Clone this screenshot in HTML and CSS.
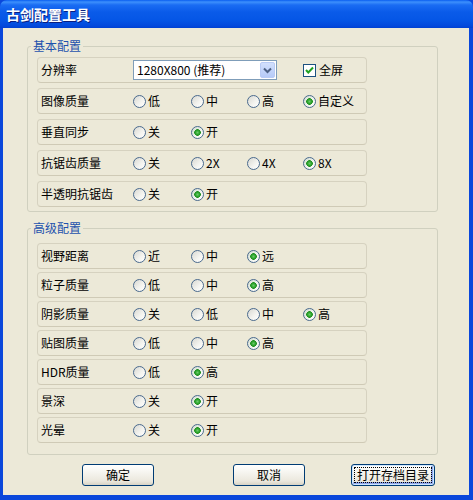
FILE: index.html
```html
<!DOCTYPE html>
<html lang="zh-CN">
<head>
    <meta charset="UTF-8">
    <title>古剑配置工具</title>
    <link rel="stylesheet" href="styles.css">
</head>
<body>
    <div class="window">
        <div class="titlebar">古剑配置工具</div>

        <div class="content">
            <fieldset class="group basic">
                <legend>基本配置</legend>
                <div class="rows">
                    <div class="row">
                        <span class="label">分辨率</span>
                        <div class="combo">
                            <span class="combo-text">1280X800 (推荐)</span>
                            <span class="combo-btn">
                                <svg width="9" height="7" viewBox="0 0 9 7"><path d="M1 1.5 L4.5 5 L8 1.5" fill="none" stroke="#4D6185" stroke-width="2"/></svg>
                            </span>
                        </div>
                        <label class="opt col5"><span class="check"><svg width="11" height="11" viewBox="0 0 11 11"><path d="M2 5 L4.3 7.5 L9 2.5" fill="none" stroke="#21A121" stroke-width="2"/></svg></span>全屏</label>
                    </div>
                    <div class="row">
                        <span class="label">图像质量</span>
                        <label class="opt"><input type="radio" name="img">低</label>
                        <label class="opt"><input type="radio" name="img">中</label>
                        <label class="opt"><input type="radio" name="img">高</label>
                        <label class="opt"><input type="radio" name="img" checked>自定义</label>
                    </div>
                    <div class="row">
                        <span class="label">垂直同步</span>
                        <label class="opt"><input type="radio" name="vsync">关</label>
                        <label class="opt"><input type="radio" name="vsync" checked>开</label>
                    </div>
                    <div class="row">
                        <span class="label">抗锯齿质量</span>
                        <label class="opt"><input type="radio" name="aa">关</label>
                        <label class="opt"><input type="radio" name="aa">2X</label>
                        <label class="opt"><input type="radio" name="aa">4X</label>
                        <label class="opt"><input type="radio" name="aa" checked>8X</label>
                    </div>
                    <div class="row">
                        <span class="label">半透明抗锯齿</span>
                        <label class="opt"><input type="radio" name="taa">关</label>
                        <label class="opt"><input type="radio" name="taa" checked>开</label>
                    </div>
                </div>
            </fieldset>

            <fieldset class="group advanced">
                <legend>高级配置</legend>
                <div class="rows">
                    <div class="row">
                        <span class="label">视野距离</span>
                        <label class="opt"><input type="radio" name="view">近</label>
                        <label class="opt"><input type="radio" name="view">中</label>
                        <label class="opt"><input type="radio" name="view" checked>远</label>
                    </div>
                    <div class="row">
                        <span class="label">粒子质量</span>
                        <label class="opt"><input type="radio" name="particle">低</label>
                        <label class="opt"><input type="radio" name="particle">中</label>
                        <label class="opt"><input type="radio" name="particle" checked>高</label>
                    </div>
                    <div class="row">
                        <span class="label">阴影质量</span>
                        <label class="opt"><input type="radio" name="shadow">关</label>
                        <label class="opt"><input type="radio" name="shadow">低</label>
                        <label class="opt"><input type="radio" name="shadow">中</label>
                        <label class="opt"><input type="radio" name="shadow" checked>高</label>
                    </div>
                    <div class="row">
                        <span class="label">贴图质量</span>
                        <label class="opt"><input type="radio" name="texture">低</label>
                        <label class="opt"><input type="radio" name="texture">中</label>
                        <label class="opt"><input type="radio" name="texture" checked>高</label>
                    </div>
                    <div class="row">
                        <span class="label">HDR质量</span>
                        <label class="opt"><input type="radio" name="hdr">低</label>
                        <label class="opt"><input type="radio" name="hdr" checked>高</label>
                    </div>
                    <div class="row">
                        <span class="label">景深</span>
                        <label class="opt"><input type="radio" name="dof">关</label>
                        <label class="opt"><input type="radio" name="dof" checked>开</label>
                    </div>
                    <div class="row">
                        <span class="label">光晕</span>
                        <label class="opt"><input type="radio" name="bloom">关</label>
                        <label class="opt"><input type="radio" name="bloom" checked>开</label>
                    </div>
                </div>
            </fieldset>

            <div class="buttons">
                <button class="btn btn-ok">确定</button>
                <button class="btn btn-cancel">取消</button>
                <button class="btn btn-open">打开存档目录</button>
            </div>
        </div>
    </div>
</body>
</html>
```

FILE: styles.css
```css
body {
    margin: 0;
    font-family: "Noto Sans CJK SC", "DejaVu Sans", sans-serif;
    font-size: 12px;
    line-height: 14px;
    color: #000;
    background: #fff;
}
.window {
    width: 473px;
    height: 500px;
    box-sizing: border-box;
    display: flex;
    flex-direction: column;
    background: #0a47db;
}
.titlebar {
    height: 28px;
    flex: none;
    box-sizing: border-box;
    padding: 7px 0 0 6px;
    border-radius: 7px 7px 0 0;
    background: linear-gradient(to bottom, #0a5ef0 0, #3d90fc 2px, #1a6cf3 5px, #0a5be9 12px, #0556e6 20px, #0349dc 26px, #0041d2 28px);
    color: #fff;
    font-size: 14px;
    font-weight: bold;
    text-shadow: 1px 1px 0 #0a1e80;
}
.content {
    flex: 1;
    margin: 0 4px 5px 3px;
    background: #ece9d8;
    padding: 11px 0 0 24px;
}
.group {
    width: 411px;
    box-sizing: border-box;
    margin: 0;
    border: 1px solid #d0d0bf;
    border-radius: 3px;
    padding: 4px 0 4px 0;
}
.group legend {
    margin-left: 3px;
    padding: 0 2px;
    line-height: 14px;
    color: #1d52ad;
}
.advanced {
    margin-top: 9px;
    padding: 8px 0 11px 0;
}
.rows {
    margin-left: 9px;
    width: 330px;
    display: flex;
    flex-direction: column;
    gap: 5px;
}
.advanced .rows {
    gap: 3px;
}
.row {
    height: 26px;
    box-sizing: border-box;
    border: 1px solid #d6d2c0;
    border-bottom-color: #cfcab6;
    border-radius: 4px;
    padding-left: 3px;
    display: grid;
    grid-template-columns: 92px 58px 56px 56px 1fr;
    align-items: center;
}
.opt {
    display: flex;
    align-items: center;
    gap: 2px;
}
.col5 {
    grid-column: 5;
}
.opt input {
    appearance: none;
    -webkit-appearance: none;
    width: 13px;
    height: 13px;
    margin: 0;
    box-sizing: border-box;
    border: 1px solid #4a6a8e;
    border-radius: 50%;
    background: linear-gradient(135deg, #d8d8d2, #f4f4f0 60%, #fff);
}
.opt input:checked {
    background: radial-gradient(circle, #6cc96c 0, #2ea52e 2px, #1f8f1f 3px, rgba(0, 0, 0, 0) 3.6px),
                linear-gradient(135deg, #d2ddd0, #f2f5f0 60%, #fff);
}
.check {
    width: 13px;
    height: 13px;
    box-sizing: border-box;
    border: 1px solid #1c5180;
    background: #fff;
    display: flex;
    align-items: center;
    justify-content: center;
    margin-right: 1px;
}
.combo {
    grid-column: 2 / 5;
    width: 144px;
    height: 20px;
    box-sizing: border-box;
    border: 1px solid #7f9db9;
    background: #fff;
    display: flex;
    align-items: center;
    justify-content: space-between;
    padding-left: 3px;
}
.combo-btn {
    width: 15px;
    height: 16px;
    margin-right: 1px;
    box-sizing: border-box;
    border: 1px solid #b9cbf5;
    border-radius: 2px;
    background: linear-gradient(to bottom, #d2e0fd, #b6cbf8);
    display: flex;
    align-items: center;
    justify-content: center;
}
.buttons {
    display: flex;
    margin-top: 9px;
}
.btn {
    height: 22px;
    box-sizing: border-box;
    border: 1px solid #003c74;
    border-radius: 3px;
    background: linear-gradient(to bottom, #fff 0, #f5f4ee 40%, #ebe8dd 80%, #d8d3c5 100%);
    font-family: inherit;
    font-size: 12px;
    line-height: 14px;
    padding: 0;
    color: #000;
}
.btn-ok {
    width: 72px;
    margin-left: 55px;
}
.btn-cancel {
    width: 72px;
    margin-left: 79px;
}
.btn-open {
    width: 84px;
    margin-left: 46px;
    box-shadow: inset 0 0 0 1px #cee7ff, inset -1px -1px 0 2px #8fa6ec;
    outline: 1px dotted #000;
    outline-offset: -4px;
}
```
